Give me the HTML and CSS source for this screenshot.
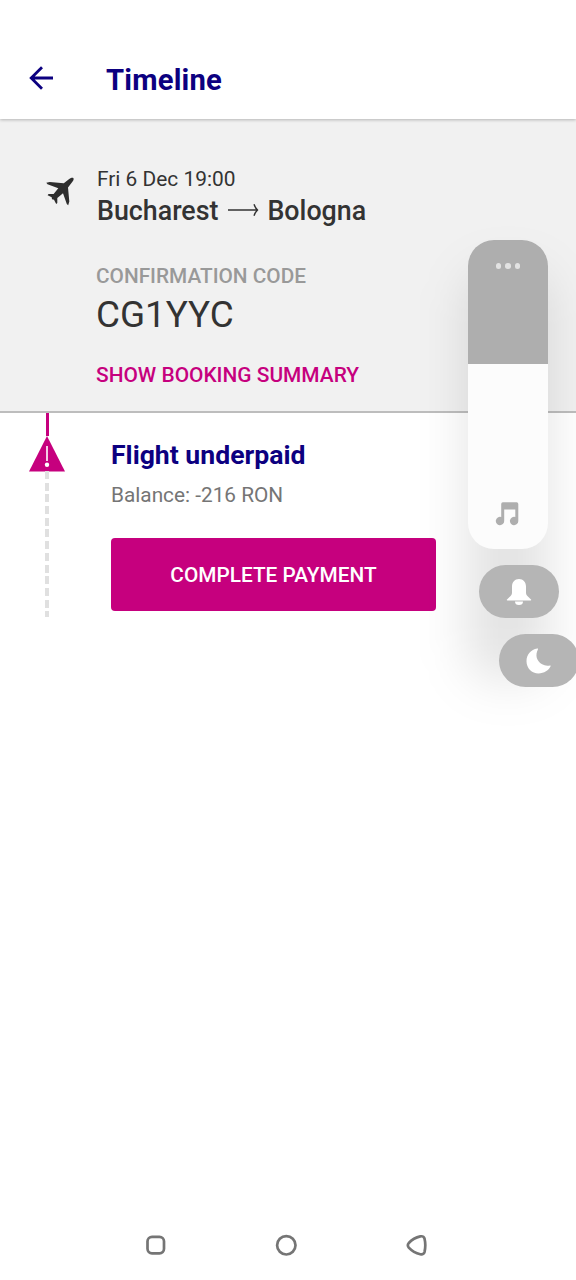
FILE: index.html
```html
<!DOCTYPE html>
<html lang="en">
<head>
<meta charset="utf-8">
<title>Timeline</title>
<link rel="stylesheet" href="styles.css">
</head>
<body>
<div class="screen">
  <header class="app-bar">
    <svg class="back" width="26" height="26" viewBox="0 0 26 26"><path d="M25 13H3.500M14 2.200L3.200 13 14 23.800"/></svg>
    <h1 class="title">Timeline</h1>
  </header>

  <section class="summary">
    <svg class="plane" width="30" height="30" viewBox="0 0 30 30"><path d="M27.300 2C28.100 2.900 27.500 4.400 26.400 5.800L22 11.500 23.300 25.500 22.200 29.200 20.800 28 17 17.200 11.300 22 11.300 27 10.200 28 8 23.800 6 23.300 5.700 21.300 1.600 19.200 2.500 18 7.600 18 12.300 12.200 1.500 8.200.3 6.800 3.800 6 17.800 7.200 23.200 3C24.800 1.800 26.600 1.200 27.300 2z"/></svg>
    <div class="trip">
      <p class="date">Fri 6 Dec 19:00</p>
      <p class="route"><span class="from">Bucharest</span><svg class="route-arrow" width="32" height="14" viewBox="0 0 32 14"><path d="M1 7h30M27 1.200Q28.200 4.800 30.500 7 28.200 9.200 27 12.800"/></svg><span class="to">Bologna</span></p>
      <p class="label">CONFIRMATION CODE</p>
      <p class="code">CG1YYC</p>
      <a class="link">SHOW BOOKING SUMMARY</a>
    </div>
  </section>

  <main class="timeline">
    <div class="rail">
      <div class="rail-done"></div>
      <svg class="warning" width="36" height="36" viewBox="0 0 36 36"><path class="tri" d="M18 0L36 35.500H0z"/><path class="mark" d="M18 10v15"/><circle cx="18" cy="28.800" r="2.200"/></svg>
      <div class="rail-next"></div>
    </div>
    <div class="event">
      <h2 class="event-title">Flight underpaid</h2>
      <p class="balance">Balance: -216 RON</p>
      <button class="pay"><span class="pay-text">COMPLETE PAYMENT</span></button>
    </div>
  </main>

  <nav class="system-nav">
    <svg width="22" height="22" viewBox="0 0 22 22"><rect x="2.500" y="2.800" width="16.500" height="16.500" rx="4.500"/></svg>
    <svg width="22" height="22" viewBox="0 0 22 22"><circle cx="11.300" cy="11.300" r="9.200"/></svg>
    <svg width="22" height="22" viewBox="0 0 22 22"><path transform="translate(1.300 .3)" d="M2.500 8.700Q7.200 3.600 14 2.100q3.200-.7 4.200 2.100 1.600 6.800 0 13.600-1 2.800-4.200 2.100Q7.200 18.400 2.500 13.300q-1.900-2.300 0-4.600z"/></svg>
  </nav>

  <aside class="volume">
    <div class="slider">
      <div class="slider-empty"><i></i><i></i><i></i></div>
      <div class="slider-level">
        <svg width="24" height="24" viewBox="0 0 24 24"><path d="M6.200 2Q6.200.3 7.900.3h13.700q1.700 0 1.700 1.700V19a4.200 4.200 0 1 1-3-4V7.500H9.200V19a4.200 4.200 0 1 1-3-4z"/></svg>
      </div>
    </div>
    <div class="pill ring">
      <svg width="26" height="28" viewBox="0 0 26 28"><path d="M13 1c4.300 0 7 3.200 7 7.500v6.300c0 1.200.5 2.200 1.400 3.100l3.600 3.500c.5.500.2 1-.4 1H1.400c-.6 0-.9-.5-.4-1l3.600-3.500C5.500 17 6 16 6 14.800V8.500C6 4.200 8.700 1 13 1zM9 23.500h8a4 3.500 0 0 1-8 0z"/></svg>
    </div>
    <div class="pill night">
      <svg width="26" height="26" viewBox="0 0 26 26"><path d="M11.200.5C5 1.400.5 6.700.5 13.200.5 20.100 5.800 25.500 12.500 25.500c5.400 0 10.500-3.100 12.200-7.400.2-.5-.1-.8-.6-.7-2.800.6-5.600.3-8-1.100C10.400 13 9 7.200 12 1.300c.3-.6-.1-.9-.8-.8z"/></svg>
    </div>
  </aside>
</div>
</body>
</html>
```
FILE: styles.css
```css
* { box-sizing: border-box; }
body { margin: 0; font-family: Roboto, "Liberation Sans", sans-serif; background: #fff; }
h1, h2, p { margin: 0; white-space: nowrap; }
svg { display: block; flex: none; }

.screen {
  position: relative;
  display: flex;
  flex-direction: column;
  width: 576px;
  height: 1280px;
  overflow: hidden;
  background: #fff;
}

.app-bar {
  position: relative;
  z-index: 1;
  display: flex;
  align-items: center;
  height: 119px;
  padding: 41px 0 0 28px;
  background: #fff;
  box-shadow: 0 1px 3px rgba(0, 0, 0, .25);
}
.back { fill: none; stroke: #0c0080; stroke-width: 2.800; margin-bottom: 5px; }
.title { margin-left: 52px; font-size: 29.200px; line-height: 40px; font-weight: 700; letter-spacing: .2px; color: #0c0080; }

.summary {
  display: flex;
  height: 294px;
  padding: 47px 0 0 46px;
  background: #f1f1f1;
  border-bottom: 2px solid #bdbdbd;
}
.plane { margin-top: 10px; fill: #2e2e2e; }
.trip { margin-left: 20px; color: #333; }
.date { margin-left: 1px; font-size: 20.900px; line-height: 26px; }
.route { display: flex; align-items: center; margin-left: 1px; font-size: 26.800px; line-height: 38px; font-weight: 500; }
.route-arrow { margin: 0 8px 3px 9px; fill: none; stroke: #333; stroke-width: 1.400; }
.label { margin-top: 33px; font-size: 20.800px; line-height: 26px; font-weight: 500; color: #999; }
.code { font-size: 36.800px; line-height: 52px; }
.link { display: block; margin-top: 21px; font-size: 20.900px; line-height: 26px; font-weight: 500; color: #c6007e; white-space: nowrap; }

.timeline { display: flex; flex: 1; padding-left: 29px; }
.rail { display: flex; flex-direction: column; align-items: center; width: 36px; }
.rail-done { width: 3px; height: 23px; background: #c6007e; }
.warning .tri { fill: #c6007e; }
.warning .mark { stroke: #fff; stroke-width: 1.600; }
.warning circle { fill: #fff; }
.rail-next {
  width: 4px;
  height: 146px;
  margin-top: -1px;
  background: repeating-linear-gradient(#e0e0e0 0 8px, #fff 8px 11.700px);
}
.event { margin-left: 46px; padding-top: 24px; }
.event-title { font-size: 26.600px; line-height: 36px; font-weight: 700; color: #0c0080; }
.balance { margin-top: 9px; font-size: 20.800px; line-height: 26px; color: #757575; }
.pay {
  display: block;
  width: 325px;
  height: 73px;
  margin-top: 30px;
  padding: 0;
  border: 0;
  border-radius: 4px;
  background: #c6007e;
  color: #fff;
  font: 500 20.800px/26px Roboto, "Liberation Sans", sans-serif;
}

.system-nav { display: flex; gap: 108px; height: 46px; padding-left: 145px; }
.system-nav svg { fill: none; stroke: #757575; stroke-width: 2.700; }

/* Volume panel floats over the page */
.volume { position: absolute; z-index: 2; top: 240px; left: 468px; display: flex; flex-direction: column; gap: 16px; }
/* One soft shadow shared by the slider and both pills */
.volume::before {
  content: "";
  position: absolute;
  z-index: -1;
  top: 32px;
  left: 0;
  width: 80px;
  height: 408px;
  border-radius: 30px;
  background: rgba(0, 0, 0, .115);
  filter: blur(25px);
}
.slider {
  width: 80px;
  height: 309px;
  border-radius: 26px;
  overflow: hidden;
  background: #fcfcfc;
}
.slider-empty { display: flex; justify-content: center; gap: 4px; height: 124px; padding-top: 23px; background: #aeaeae; }
.slider-empty i { width: 5.500px; height: 5.500px; border-radius: 50%; background: #e2e2e2; }
.slider-level { padding: 138px 0 0 27px; fill: #aeaeae; }
.pill {
  display: flex;
  align-items: center;
  justify-content: center;
  width: 80px;
  height: 53px;
  border-radius: 27px;
  background: #b5b5b5;
  fill: #fff;
}
.ring { margin-left: 11px; }
.night { margin-left: 31px; }
```
